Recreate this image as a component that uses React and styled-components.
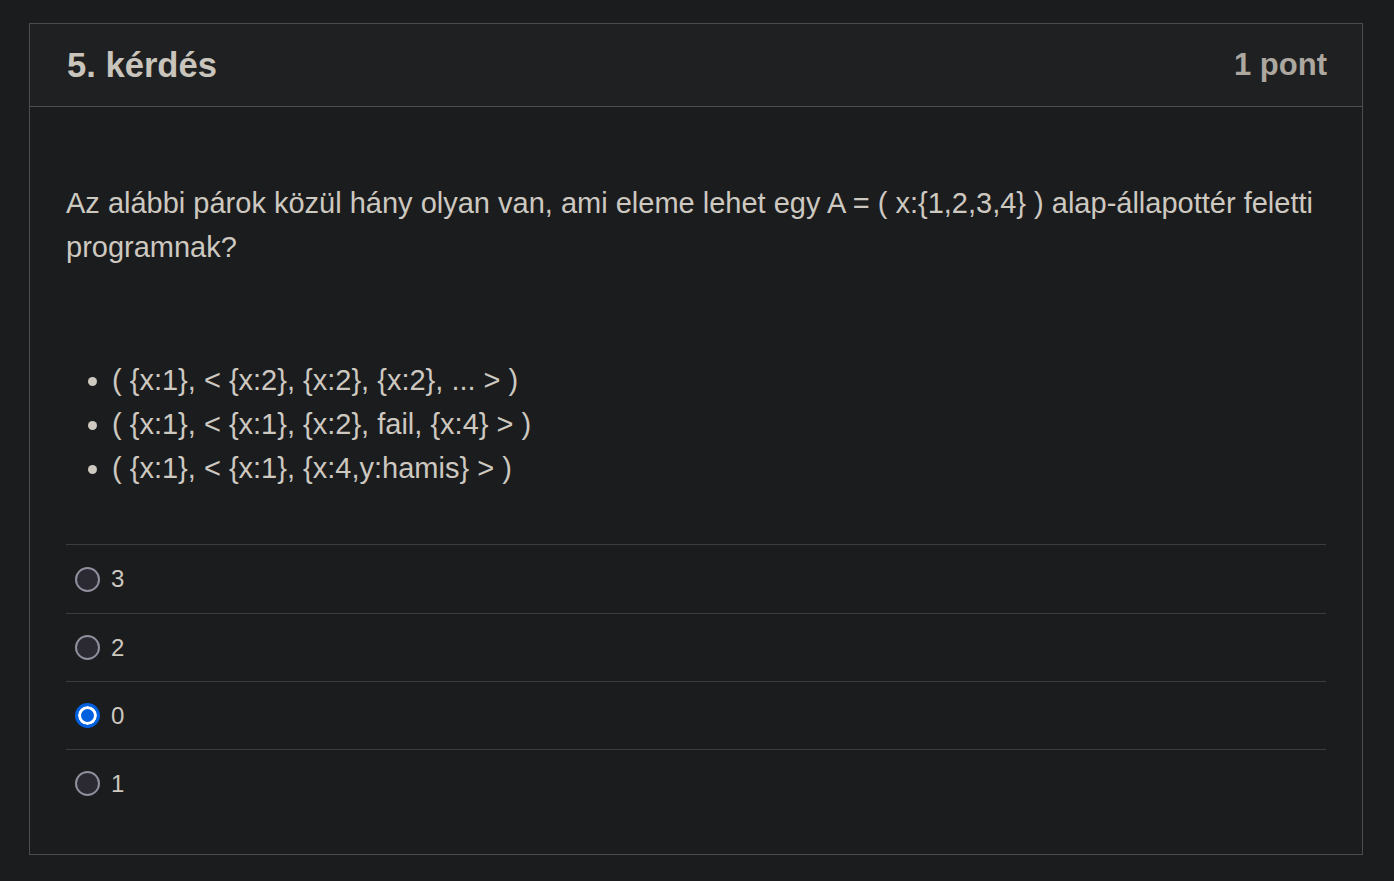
import styled, { createGlobalStyle } from "styled-components";

const GlobalStyle = createGlobalStyle`
  html, body {
    margin: 0;
    padding: 0;
    background-color: #1b1c1e;
  }
  body {
    font-family: "Liberation Sans", Arial, sans-serif;
    color: #cdc8c0;
  }
`;

const Page = styled.div`
  padding: 23px 31px 26px 29px;
  background-color: #1b1c1e;
  min-height: 881px;
  box-sizing: border-box;
`;

const Card = styled.section`
  border: 1px solid #4b4c4e;
  background-color: #1b1c1e;
`;

const Header = styled.header`
  height: 83px;
  box-sizing: border-box;
  display: flex;
  align-items: center;
  justify-content: space-between;
  padding: 0 35px 0 37px;
  background-color: #1f2022;
  border-bottom: 1px solid #4b4c4e;
`;

const Title = styled.h2`
  margin: 0;
  font-size: 34.6px;
  font-weight: bold;
  color: #c9c4bc;
`;

const Points = styled.span`
  font-size: 31px;
  font-weight: bold;
  color: #aca79f;
`;

const Body = styled.div`
  padding: 74px 36px 37px 36px;
`;

const Question = styled.p`
  margin: 0;
  font-size: 29px;
  line-height: 44px;
  color: #cdc8c0;
`;

const PairList = styled.ul`
  margin: 89px 0 54px 0;
  padding-left: 46px;
  font-size: 29px;
  line-height: 44px;
  color: #cdc8c0;
`;

const Options = styled.div`
  display: flex;
  flex-direction: column;
`;

const Option = styled.label`
  height: 67px;
  display: flex;
  align-items: center;
  gap: 11px;
  padding-left: 9px;
  border-top: 1px solid #3c3d3f;
  font-size: 24px;
  color: #cdc8c0;
  &:first-child {
    height: 68px;
  }
`;

const Radio = styled.input.attrs({ type: "radio" })`
  appearance: none;
  margin: 0;
  width: 25px;
  height: 25px;
  border-radius: 50%;
  box-sizing: border-box;
  border: 2px solid #8f8f9d;
  background-color: #2b2a33;
  &:checked {
    border: 3px solid #0060df;
    background-color: #0060df;
    box-shadow: inset 0 0 0 3px #ffffff;
  }
`;

const pairs = [
  "( {x:1}, < {x:2}, {x:2}, {x:2}, ... > )",
  "( {x:1}, < {x:1}, {x:2}, fail, {x:4} > )",
  "( {x:1}, < {x:1}, {x:4,y:hamis} > )",
];

const answers = ["3", "2", "0", "1"];

const App = () => {
  return (
    <>
      <GlobalStyle />
      <Page>
        <Card>
          <Header>
            <Title>5. kérdés</Title>
            <Points>1 pont</Points>
          </Header>
          <Body>
            <Question>
              Az alábbi párok közül hány olyan van, ami eleme lehet egy A = (
              x:{"{1,2,3,4}"} ) alap-állapottér feletti programnak?
            </Question>
            <PairList>
              {pairs.map((p) => (
                <li key={p}>{p}</li>
              ))}
            </PairList>
            <Options>
              {answers.map((a) => (
                <Option key={a}>
                  <Radio name="q5" defaultChecked={a === "0"} />
                  {a}
                </Option>
              ))}
            </Options>
          </Body>
        </Card>
      </Page>
    </>
  );
};

export default App;
